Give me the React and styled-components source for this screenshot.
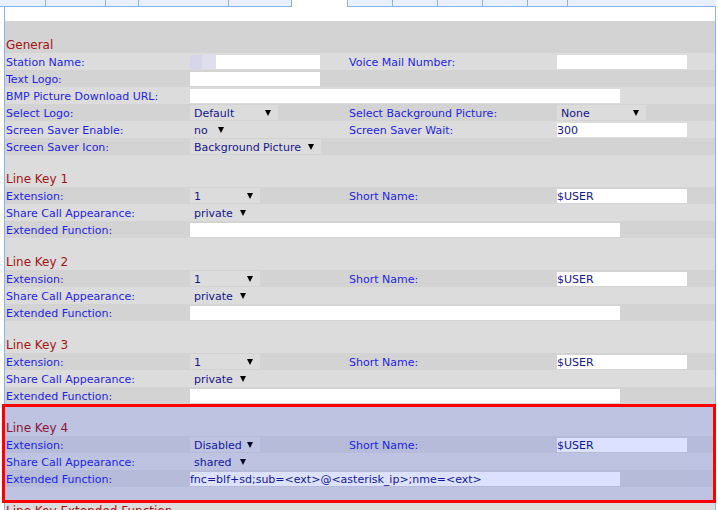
import React from "react";
import styled, { createGlobalStyle } from "styled-components";

const Global = createGlobalStyle`
  html, body { margin: 0; padding: 0; background: #fff; overflow: hidden; }
  body { font-family: "DejaVu Sans", Verdana, sans-serif; }
`;

const BORDER = "#8ab2f0";

const TabBar = styled.div`
  display: flex;
  height: 7px;
  width: 716px;
`;

const Tab = styled.div`
  box-sizing: border-box;
  width: ${(p) => p.$w}px;
  height: 7px;
  background: ${(p) => (p.$active ? "#fff" : "#e8f0fe")};
  border-bottom: ${(p) => (p.$active ? "none" : `1px solid ${BORDER}`)};
  border-right: ${(p) => (p.$active || p.$last ? "none" : `1px solid ${BORDER}`)};
  border-left: ${(p) => (p.$first ? `1px solid ${BORDER}` : "none")};
`;

const Panel = styled.div`
  box-sizing: border-box;
  margin-left: 4px;
  width: 712px;
  padding-top: 14px;
  border-left: 1px solid ${BORDER};
  border-right: 1px solid ${BORDER};
`;

const Table = styled.div`
  width: 710px;
  display: flex;
  flex-direction: column;
`;

const Section = styled.div`
  position: relative;
  display: flex;
  flex-direction: column;
`;

const Header = styled.div`
  height: 32px;
  box-sizing: border-box;
  display: flex;
  align-items: flex-end;
  padding-left: 1px;
  font-size: 12px;
  line-height: 15px;
  color: #a31414;
  background: ${(p) => (p.$dark ? "#d3d3d3" : "#dcdcdc")};
`;

const Row = styled.div`
  display: grid;
  grid-template-columns: 183px 158px 209px 160px;
  height: 17px;
  align-items: center;
  background: ${(p) => (p.$dark ? "#d3d3d3" : "#dcdcdc")};
  font-size: 11px;
`;

const Label = styled.div`
  color: #2424e2;
  padding-left: ${(p) => (p.$second ? 3 : 1)}px;
  padding-top: 2px;
  line-height: 15px;
  white-space: nowrap;
`;

const Cell = styled.div`
  display: flex;
  align-items: center;
  padding-left: 2px;
  grid-column: ${(p) => (p.$span ? "2 / 5" : "auto")};
`;

const Field = styled.div`
  box-sizing: border-box;
  display: flex;
  align-items: flex-start;
  width: ${(p) => p.$w}px;
  height: 14px;
  background: #fff;
  color: #16168a;
  font-size: 11px;
  line-height: 12px;
  padding-top: 2px;
  white-space: nowrap;
  overflow: hidden;
`;

const Mosaic = styled.span`
  display: block;
  flex: none;
  width: ${(p) => p.$w}px;
  height: 14px;
  margin-top: -2px;
  background: ${(p) => p.$c};
`;

const Select = styled.div`
  box-sizing: border-box;
  display: flex;
  align-items: center;
  justify-content: space-between;
  width: ${(p) => p.$w}px;
  height: 15px;
  padding: 0 7px 0 4px;
  background: #dcdcdc;
  color: #16168a;
  font-size: 11px;
  white-space: nowrap;
`;

const SelectText = styled.span`
  padding-top: 2px;
`;

const Arrow = () => (
  <svg width="6" height="6" viewBox="0 0 6 6" style={{ flex: "none" }}>
    <polygon points="0,0 6,0 3,6" fill="#000" />
  </svg>
);

const Highlight = styled.div`
  position: absolute;
  top: 0;
  left: -3px;
  right: -1px;
  bottom: -16px;
  border: 3px solid #ff0000;
  background: rgba(0, 40, 255, 0.14);
  z-index: 1;
  pointer-events: none;
`;

const Sel = ({ w, children }) => (
  <Select $w={w}>
    <SelectText>{children}</SelectText>
    <Arrow />
  </Select>
);

const LineKey = ({ n, ext, share, fn, highlight }) => (
  <Section>
    <Header>Line Key {n}</Header>
    <Row $dark>
      <Label>Extension:</Label>
      <Cell>
        <Sel w={70}>{ext}</Sel>
      </Cell>
      <Label $second>Short Name:</Label>
      <Cell>
        <Field $w={130}>$USER</Field>
      </Cell>
    </Row>
    <Row>
      <Label>Share Call Appearance:</Label>
      <Cell>
        <Sel w={63}>{share}</Sel>
      </Cell>
    </Row>
    <Row $dark>
      <Label>Extended Function:</Label>
      <Cell $span>
        <Field $w={430}>{fn}</Field>
      </Cell>
    </Row>
    {highlight && <Highlight />}
  </Section>
);

const tabs = [
  { w: 46 },
  { w: 60 },
  { w: 33 },
  { w: 90 },
  { w: 63 },
  { w: 55, active: true },
  { w: 46, first: true },
  { w: 45 },
  { w: 45 },
  { w: 45 },
  { w: 40 },
  { w: 148, last: true },
];

export default function App() {
  return (
    <>
      <Global />
      <TabBar>
        {tabs.map((t, i) => (
          <Tab key={i} $w={t.w} $active={t.active} $first={t.first} $last={t.last} />
        ))}
      </TabBar>
      <Panel>
        <Table>
          <Section>
            <Header $dark>General</Header>
            <Row>
              <Label>Station Name:</Label>
              <Cell>
                <Field $w={130}>
                  <Mosaic $w={12} $c="#d6d6eb" />
                  <Mosaic $w={14} $c="#dedeef" />
                </Field>
              </Cell>
              <Label $second>Voice Mail Number:</Label>
              <Cell>
                <Field $w={130} />
              </Cell>
            </Row>
            <Row $dark>
              <Label>Text Logo:</Label>
              <Cell>
                <Field $w={130} />
              </Cell>
            </Row>
            <Row>
              <Label>BMP Picture Download URL:</Label>
              <Cell $span>
                <Field $w={430} />
              </Cell>
            </Row>
            <Row $dark>
              <Label>Select Logo:</Label>
              <Cell>
                <Sel w={88}>Default</Sel>
              </Cell>
              <Label $second>Select Background Picture:</Label>
              <Cell>
                <Sel w={89}>None</Sel>
              </Cell>
            </Row>
            <Row>
              <Label>Screen Saver Enable:</Label>
              <Cell>
                <Sel w={41}>no</Sel>
              </Cell>
              <Label $second>Screen Saver Wait:</Label>
              <Cell>
                <Field $w={130}>300</Field>
              </Cell>
            </Row>
            <Row $dark>
              <Label>Screen Saver Icon:</Label>
              <Cell>
                <Sel w={131}>Background Picture</Sel>
              </Cell>
            </Row>
          </Section>
          <LineKey n={1} ext="1" share="private" fn="" />
          <LineKey n={2} ext="1" share="private" fn="" />
          <LineKey n={3} ext="1" share="private" fn="" />
          <LineKey
            n={4}
            ext="Disabled"
            share="shared"
            fn="fnc=blf+sd;sub=<ext>@<asterisk_ip>;nme=<ext>"
            highlight
          />
          <Section>
            <Header>Line Key Extended Function</Header>
          </Section>
        </Table>
      </Panel>
    </>
  );
}
